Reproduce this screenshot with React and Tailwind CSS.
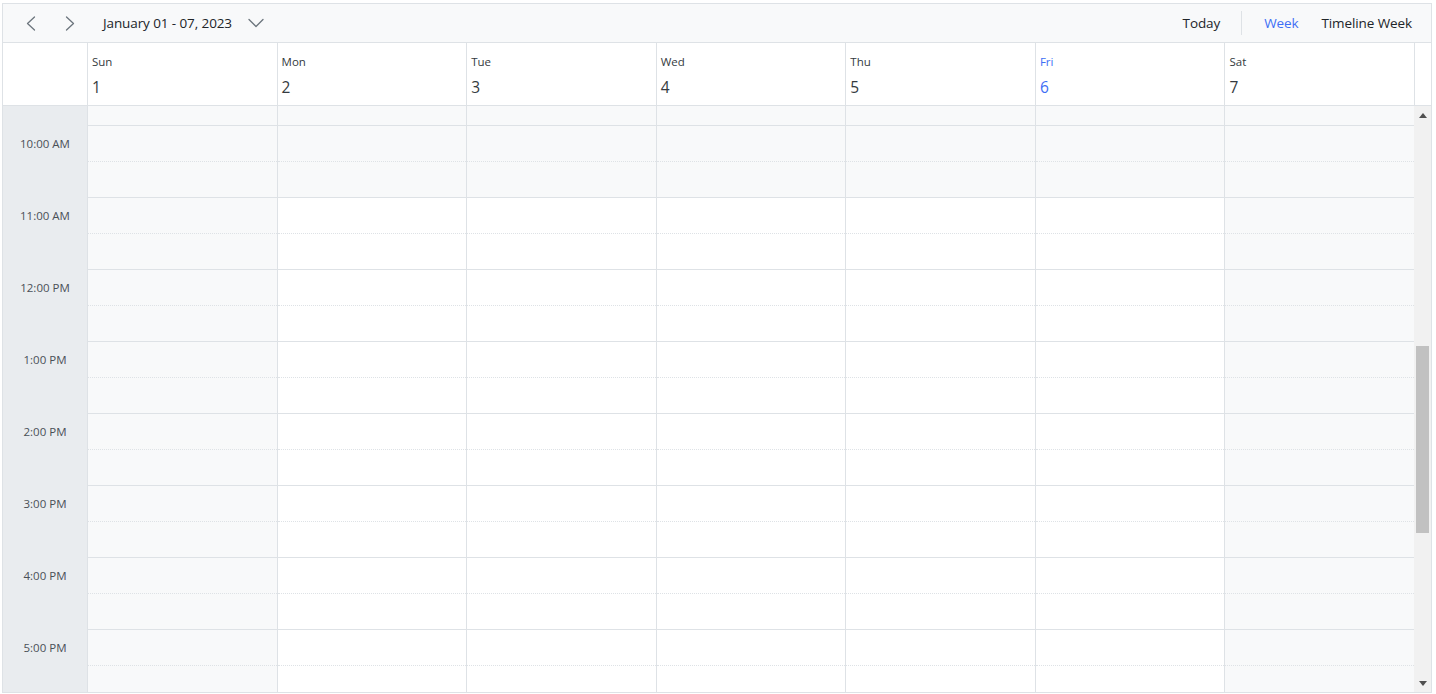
import { useMemo } from 'react'

const DAYS = [
  { name: 'Sun', date: 1, off: true },
  { name: 'Mon', date: 2 },
  { name: 'Tue', date: 3 },
  { name: 'Wed', date: 4 },
  { name: 'Thu', date: 5 },
  { name: 'Fri', date: 6, today: true },
  { name: 'Sat', date: 7, off: true },
]

const HOURS = ['10:00 AM', '11:00 AM', '12:00 PM', '1:00 PM', '2:00 PM', '3:00 PM', '4:00 PM', '5:00 PM']

function Chevron({ dir }) {
  const pts = dir === 'left' ? '8.5,1 1.5,7.5 8.5,14' : '1.5,1 8.5,7.5 1.5,14'
  return (
    <svg width="10" height="15" viewBox="0 0 10 15" fill="none">
      <polyline points={pts} stroke="#6c757d" strokeWidth="1.3" strokeLinecap="round" strokeLinejoin="round" />
    </svg>
  )
}

function DayColumn({ off }) {
  // tail of 9:30 and the 10 AM hour are outside work hours
  const slots = useMemo(() => {
    const list = [{ h: 20, solid: true, gray: true }]
    HOURS.forEach((_, i) => {
      list.push({ h: 36, solid: false, gray: i === 0 })
      list.push({ h: 36, solid: true, gray: i === 0 })
    })
    return list
  }, [])

  return (
    <div className="flex-1 min-w-0 flex flex-col border-l border-[#dee2e6]">
      {slots.map((s, i) => (
        <div
          key={i}
          className={`shrink-0 border-b border-[#dee2e6] ${s.solid ? 'border-solid' : 'border-dotted'} ${off || s.gray ? 'bg-[#f8f9fa]' : 'bg-white'}`}
          style={{ height: s.h }}
        />
      ))}
    </div>
  )
}

export default function App() {
  return (
    <div className="ml-[2px] mt-[3px] w-[1430px] h-[690px] border border-[#dee2e6] flex flex-col overflow-hidden text-[#212529]" style={{ fontFamily: '"Open Sans", "Noto Sans", sans-serif' }}>
      {/* toolbar */}
      <div className="h-[39px] shrink-0 bg-[#f8f9fa] border-b border-[#dee2e6] shadow-[0_1px_1px_rgba(0,0,0,0.04)] flex items-center">
        <button className="ml-[23px] w-[10px] flex items-center justify-center"><Chevron dir="left" /></button>
        <button className="ml-[29px] w-[10px] flex items-center justify-center"><Chevron dir="right" /></button>
        <span className="ml-[28px] text-[13.5px] tracking-[-0.1px]">January 01 - 07, 2023</span>
        <svg className="ml-[16px]" width="16" height="10" viewBox="0 0 16 10" fill="none">
          <polyline points="1,1.5 8,8.5 15,1.5" stroke="#6c757d" strokeWidth="1.3" strokeLinecap="round" strokeLinejoin="round" />
        </svg>
        <div className="ml-auto flex items-center text-[13.5px] tracking-[-0.1px]">
          <span>Today</span>
          <div className="w-px h-[24px] bg-[#dee2e6] ml-[21px] mr-[22px]" />
          <span className="text-[#3d6ef5]">Week</span>
          <span className="ml-[23px] mr-[19px]">Timeline Week</span>
        </div>
      </div>

      {/* header */}
      <div className="h-[63px] shrink-0 flex border-b border-[#dee2e6] bg-white">
        <div className="w-[84px] shrink-0" />
        <div className="flex-1 flex">
          {DAYS.map(d => (
            <div key={d.name} className={`flex-1 min-w-0 border-l border-[#dee2e6] pl-[4px] pt-[11px] ${d.today ? 'text-[#3d6ef5]' : 'text-[#343a40]'}`}>
              <div className="text-[11.5px] leading-[16px]">{d.name}</div>
              <div className="text-[15.5px] leading-[22px] mt-[6px]">{d.date}</div>
            </div>
          ))}
        </div>
        <div className="w-[17px] shrink-0 border-l border-[#dee2e6]" />
      </div>

      {/* body */}
      <div className="flex-1 min-h-0 flex overflow-hidden">
        <div className="w-[84px] shrink-0 bg-[#e9ecef] flex flex-col">
          <div className="h-[20px] shrink-0" />
          {HOURS.map(h => (
            <div key={h} className="h-[72px] shrink-0">
              <div className="h-[36px] flex items-center justify-center text-[11.5px] text-[#495057]">{h}</div>
            </div>
          ))}
        </div>
        <div className="flex-1 flex">
          {DAYS.map(d => <DayColumn key={d.name} off={d.off} />)}
        </div>
        <div className="w-[17px] shrink-0 bg-[#f1f1f1] flex flex-col items-center">
          <svg className="mt-[7px] shrink-0" width="8" height="5" viewBox="0 0 8 5"><polygon points="0,5 8,5 4,0" fill="#505050" /></svg>
          <div className="mt-[228px] w-[13px] h-[187px] bg-[#c1c1c1]" />
          <div className="flex-1" />
          <svg className="mb-[6px] shrink-0" width="8" height="5" viewBox="0 0 8 5"><polygon points="0,0 8,0 4,5" fill="#505050" /></svg>
        </div>
      </div>
    </div>
  )
}
